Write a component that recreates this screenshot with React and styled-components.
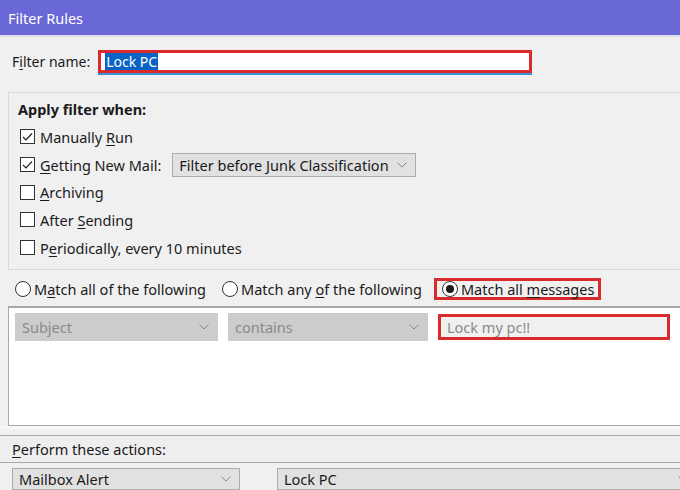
import React from "react";
import styled, { createGlobalStyle } from "styled-components";

const GlobalStyle = createGlobalStyle`
  html, body {
    margin: 0;
    padding: 0;
    background: #f0f0f0;
    overflow: hidden;
  }
  body {
    font-family: "Noto Sans", "Open Sans", sans-serif;
    font-size: 14.5px;
    color: #1a1a1a;
  }
`;

const Window = styled.div`
  width: 680px;
  height: 490px;
  overflow: hidden;
  display: flex;
  flex-direction: column;
  background: #f0f0f0;

  & > * {
    flex: none;
  }
`;

const TitleBar = styled.div`
  height: 35px;
  display: flex;
  align-items: center;
  padding-left: 8px;
  background: #6a67d6;
  color: #ffffff;
  font-size: 14.5px;
  border-bottom: 2px solid #dcdcec;
`;

const NameRow = styled.div`
  display: flex;
  align-items: center;
  gap: 7px;
  padding: 6px 0 0 12px;
  height: 42px;
  box-sizing: border-box;
  font-size: 14px;
`;

const NameInput = styled.div`
  width: 434px;
  height: 23px;
  box-sizing: border-box;
  border: 3px solid #d92b2b;
  background: #ffffff;
  box-shadow: 0 2px 0 #3b8fd8;
  display: flex;
  align-items: center;
  padding-left: 4px;
  margin-left: 1px;
`;

const Selected = styled.span`
  background: #0a64c8;
  color: #ffffff;
  line-height: 17px;
  padding: 0 1px;
`;

const GroupBox = styled.div`
  margin: 13px 0 0 8px;
  width: 700px;
  height: 178px;
  box-sizing: border-box;
  border: 1px solid #dadada;
  padding: 5px 0 0 9px;
  display: flex;
  flex-direction: column;
`;

const Legend = styled.div`
  font-weight: 700;
  height: 22px;
  line-height: 22px;
  margin-bottom: 3px;
`;

const CheckRow = styled.div`
  display: flex;
  align-items: center;
  height: 27.7px;
  padding-left: 2px;
`;

const Box = styled.span`
  width: 13px;
  height: 13px;
  flex: none;
  border: 1px solid #333333;
  background: #ffffff;
  margin-right: 5px;
  display: flex;
  align-items: center;
  justify-content: center;
`;

const U = styled.span`
  text-decoration: underline;
  text-underline-offset: 2px;
`;

const Select = styled.div`
  box-sizing: border-box;
  width: ${(p) => p.$w}px;
  height: ${(p) => p.$h || 24}px;
  margin-left: ${(p) => p.$ml || 0}px;
  background: ${(p) => (p.$muted ? "#cccccc" : "#e1e1e1")};
  border: 1px solid ${(p) => (p.$muted ? "#cccccc" : "#adadad")};
  color: ${(p) => (p.$muted ? "#8a8a8a" : "#1a1a1a")};
  display: flex;
  align-items: center;
  justify-content: space-between;
  padding: 0 8px 0 6px;
  flex: none;
`;

const RadioRow = styled.div`
  display: flex;
  align-items: center;
  height: 36px;
  padding: 2px 0 0 15px;
  box-sizing: border-box;
`;

const RadioItem = styled.div`
  display: flex;
  align-items: center;
  height: 22px;
  margin-right: ${(p) => p.$mr || 0}px;
  ${(p) =>
    p.$marked &&
    `
    border: 3px solid #d92b2b;
    padding: 0 4px 0 5px;
    margin-left: -8px;
    box-sizing: border-box;
  `}
`;

const Circle = styled.span`
  width: 14px;
  height: 14px;
  flex: none;
  border-radius: 50%;
  border: 1px solid #333333;
  background: #ffffff;
  margin-right: 3px;
  display: flex;
  align-items: center;
  justify-content: center;
`;

const Dot = styled.span`
  width: 8px;
  height: 8px;
  border-radius: 50%;
  background: #1a1a1a;
`;

const ListBox = styled.div`
  margin-left: 8px;
  width: 700px;
  height: 120px;
  box-sizing: border-box;
  background: #ffffff;
  border: 1px solid #a8a8a8;
  border-top: 2px solid #a8a8a8;
  padding: 5px 0 0 6px;
`;

const RuleRow = styled.div`
  display: flex;
  align-items: center;
  gap: 10px;
`;

const ValueInput = styled.div`
  box-sizing: border-box;
  width: 232px;
  height: 26px;
  border: 3px solid #d92b2b;
  background: #f0f0f0;
  color: #8a8a8a;
  display: flex;
  align-items: center;
  padding-left: 6px;
`;

const Splitter = styled.div`
  height: 10px;
  box-sizing: border-box;
  border-bottom: 1px solid #a8a8a8;
  box-shadow: inset 0 3px 0 #f7f7f7;
`;

const ActionsHeader = styled.div`
  height: 27px;
  box-sizing: border-box;
  display: flex;
  align-items: center;
  padding-left: 12px;
  border-bottom: 1px solid #a8a8a8;
  background: #eeeeee;
`;

const ActionRow = styled.div`
  display: flex;
  align-items: flex-start;
  padding: 5px 0 0 12px;
`;

const Chevron = () => (
  <svg width="10" height="6" viewBox="0 0 10 6">
    <path d="M0.5 0.6 L5 5 L9.5 0.6" fill="none" stroke="#8a8a8a" strokeWidth="1" />
  </svg>
);

const Tick = () => (
  <svg width="11" height="10" viewBox="0 0 11 10">
    <path d="M1 5 L4 8 L10 1.5" fill="none" stroke="#222" strokeWidth="1.2" />
  </svg>
);

function Check({ checked, children }) {
  return (
    <CheckRow>
      <Box>{checked && <Tick />}</Box>
      {children}
    </CheckRow>
  );
}

export default function App() {
  return (
    <Window>
      <GlobalStyle />
      <TitleBar>Filter Rules</TitleBar>

      <NameRow>
        <span>
          F<U>i</U>lter name:
        </span>
        <NameInput>
          <Selected>Lock PC</Selected>
        </NameInput>
      </NameRow>

      <GroupBox>
        <Legend>Apply filter when:</Legend>
        <Check checked>
          Manually&nbsp;<U>R</U>un
        </Check>
        <Check checked>
          <U>G</U>etting New Mail:
          <Select $w={244} $ml={11}>
            Filter before Junk Classification
            <Chevron />
          </Select>
        </Check>
        <Check>
          <U>A</U>rchiving
        </Check>
        <Check>
          After&nbsp;<U>S</U>ending
        </Check>
        <Check>
          P<U>e</U>riodically, every 10 minutes
        </Check>
      </GroupBox>

      <RadioRow>
        <RadioItem $mr={16}>
          <Circle />
          M<U>a</U>tch all of the following
        </RadioItem>
        <RadioItem $mr={20}>
          <Circle />
          Match any&nbsp;<U>o</U>f the following
        </RadioItem>
        <RadioItem $marked>
          <Circle>
            <Dot />
          </Circle>
          Match all&nbsp;<U>m</U>essages
        </RadioItem>
      </RadioRow>

      <ListBox>
        <RuleRow>
          <Select $w={203} $h={28} $muted>
            Subject
            <Chevron />
          </Select>
          <Select $w={200} $h={28} $muted>
            contains
            <Chevron />
          </Select>
          <ValueInput>Lock my pc!!</ValueInput>
        </RuleRow>
      </ListBox>

      <Splitter />
      <ActionsHeader>
        <span>
          <U>P</U>erform these actions:
        </span>
      </ActionsHeader>
      <ActionRow>
        <Select $w={228} $h={22}>
          Mailbox Alert
          <Chevron />
        </Select>
        <Select $w={420} $h={22} $ml={37}>
          Lock PC
          <Chevron />
        </Select>
      </ActionRow>
    </Window>
  );
}
